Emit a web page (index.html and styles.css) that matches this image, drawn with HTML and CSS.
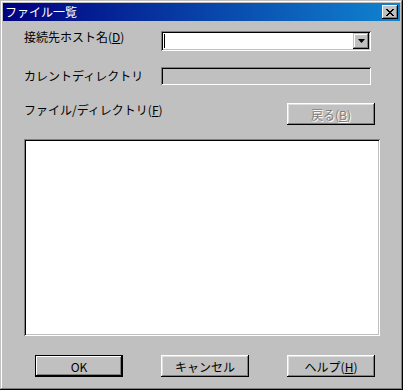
FILE: index.html
```html
<!DOCTYPE html>
<html lang="ja">
  <head>
    <title>ファイル一覧</title>
    <meta charset="UTF-8" />
    <link rel="stylesheet" href="styles.css">
  </head>

  <body>
    <div class="dialog">
      <div class="titlebar">
        <span class="title">ファイル一覧</span>
        <button class="btn-close" type="button">
          <svg width="8" height="7" viewBox="0 0 8 7">
            <path d="M0 0h2v1h1v1h2V1h1V0h2v1H7v1H6v1H5v1h1v1h1v1h1v1H6V6H5V5H3v1H2v1H0V6h1V5h1V4h1V3H2V2H1V1H0z" fill="#000"/>
          </svg>
        </button>
      </div>

      <div class="content">
        <div class="row row-host">
          <label class="label">接続先ホスト名(<u>D</u>)</label>
          <div class="combo">
            <span class="caret"></span>
            <span class="combo-btn">
              <svg width="7" height="4" viewBox="0 0 7 4"><path d="M0 0h7L3.5 4z" fill="#000"/></svg>
            </span>
          </div>
        </div>

        <div class="row row-dir">
          <label class="label">カレントディレクトリ</label>
          <div class="field"></div>
        </div>

        <div class="row row-list">
          <label class="label">ファイル/ディレクトリ(<u>F</u>)</label>
          <button class="btn btn-back" type="button" disabled>戻る(<u>B</u>)</button>
        </div>

        <div class="listbox"></div>

        <div class="buttons">
          <button class="btn btn-default" type="button">OK</button>
          <button class="btn" type="button">キャンセル</button>
          <button class="btn" type="button">ヘルプ(<u>H</u>)</button>
        </div>
      </div>
    </div>
  </body>
</html>
```

FILE: styles.css
```css
body {
  margin: 0;
  font-family: "Noto Sans CJK JP", "DejaVu Sans", sans-serif;
  font-size: 12px;
  color: #000;
  background-color: #c0c0c0;
}

.dialog {
  width: 403px;
  height: 390px;
  box-sizing: border-box;
  padding: 3px;
  background-color: #c0c0c0;
  box-shadow: inset -1px -1px #000, inset 1px 1px #c0c0c0,
    inset -2px -2px #808080, inset 2px 2px #fff;
}

.titlebar {
  height: 18px;
  display: flex;
  align-items: center;
  justify-content: space-between;
  padding: 0 2px 0 2px;
  background: linear-gradient(90deg, #000080, #1084d0);
}

.title {
  color: #fff;
  line-height: 18px;
}

.btn-close {
  width: 16px;
  height: 14px;
  padding: 0;
  border: none;
  background-color: #c0c0c0;
  display: flex;
  align-items: center;
  justify-content: center;
  box-shadow: inset -1px -1px #000, inset 1px 1px #fff,
    inset -2px -2px #808080;
}

.content {
  padding: 10px 0 0 21px;
}

.row {
  display: flex;
  align-items: flex-start;
}

.label {
  width: 137px;
  line-height: 16px;
}

.row-host .label {
  margin-top: -2px;
}

.combo {
  position: relative;
  width: 210px;
  height: 20px;
  box-sizing: border-box;
  background-color: #fff;
  box-shadow: inset 1px 1px #808080, inset -1px -1px #fff,
    inset 2px 2px #000, inset -2px -2px #c0c0c0;
}

.caret {
  position: absolute;
  left: 3px;
  top: 3px;
  width: 1px;
  height: 14px;
  background-color: #000;
}

.combo-btn {
  position: absolute;
  right: 2px;
  top: 2px;
  width: 16px;
  height: 16px;
  display: flex;
  align-items: center;
  justify-content: center;
  background-color: #c0c0c0;
  box-shadow: inset -1px -1px #000, inset 1px 1px #c0c0c0,
    inset -2px -2px #808080, inset 2px 2px #fff;
}

.row-dir {
  margin-top: 16px;
  align-items: center;
}

.field {
  width: 210px;
  height: 18px;
  box-sizing: border-box;
  box-shadow: inset 1px 1px #808080, inset -1px -1px #fff,
    inset 2px 2px #000, inset -2px -2px #c0c0c0;
}

.row-list {
  margin-top: 18px;
}

.row-list .label {
  width: 263px;
  margin-top: -1px;
}

.btn {
  width: 88px;
  height: 22px;
  padding: 0;
  border: none;
  font-family: inherit;
  font-size: 12px;
  color: #000;
  background-color: #c0c0c0;
  box-shadow: inset -1px -1px #000, inset 1px 1px #fff,
    inset -2px -2px #808080, inset 2px 2px #dfdfdf;
}

.btn-back:disabled {
  color: #808080;
  text-shadow: 1px 1px #fff;
}

.listbox {
  margin-top: 14px;
  width: 356px;
  height: 197px;
  box-sizing: border-box;
  background-color: #fff;
  box-shadow: inset 1px 1px #808080, inset -1px -1px #fff,
    inset 2px 2px #000, inset -2px -2px #c0c0c0;
}

.buttons {
  display: flex;
  gap: 38px;
  margin: 19px 0 0 11px;
}

.btn-default {
  box-shadow: inset 0 0 0 1px #000, inset -2px -2px #000,
    inset 2px 2px #fff, inset -3px -3px #808080;
}
```
